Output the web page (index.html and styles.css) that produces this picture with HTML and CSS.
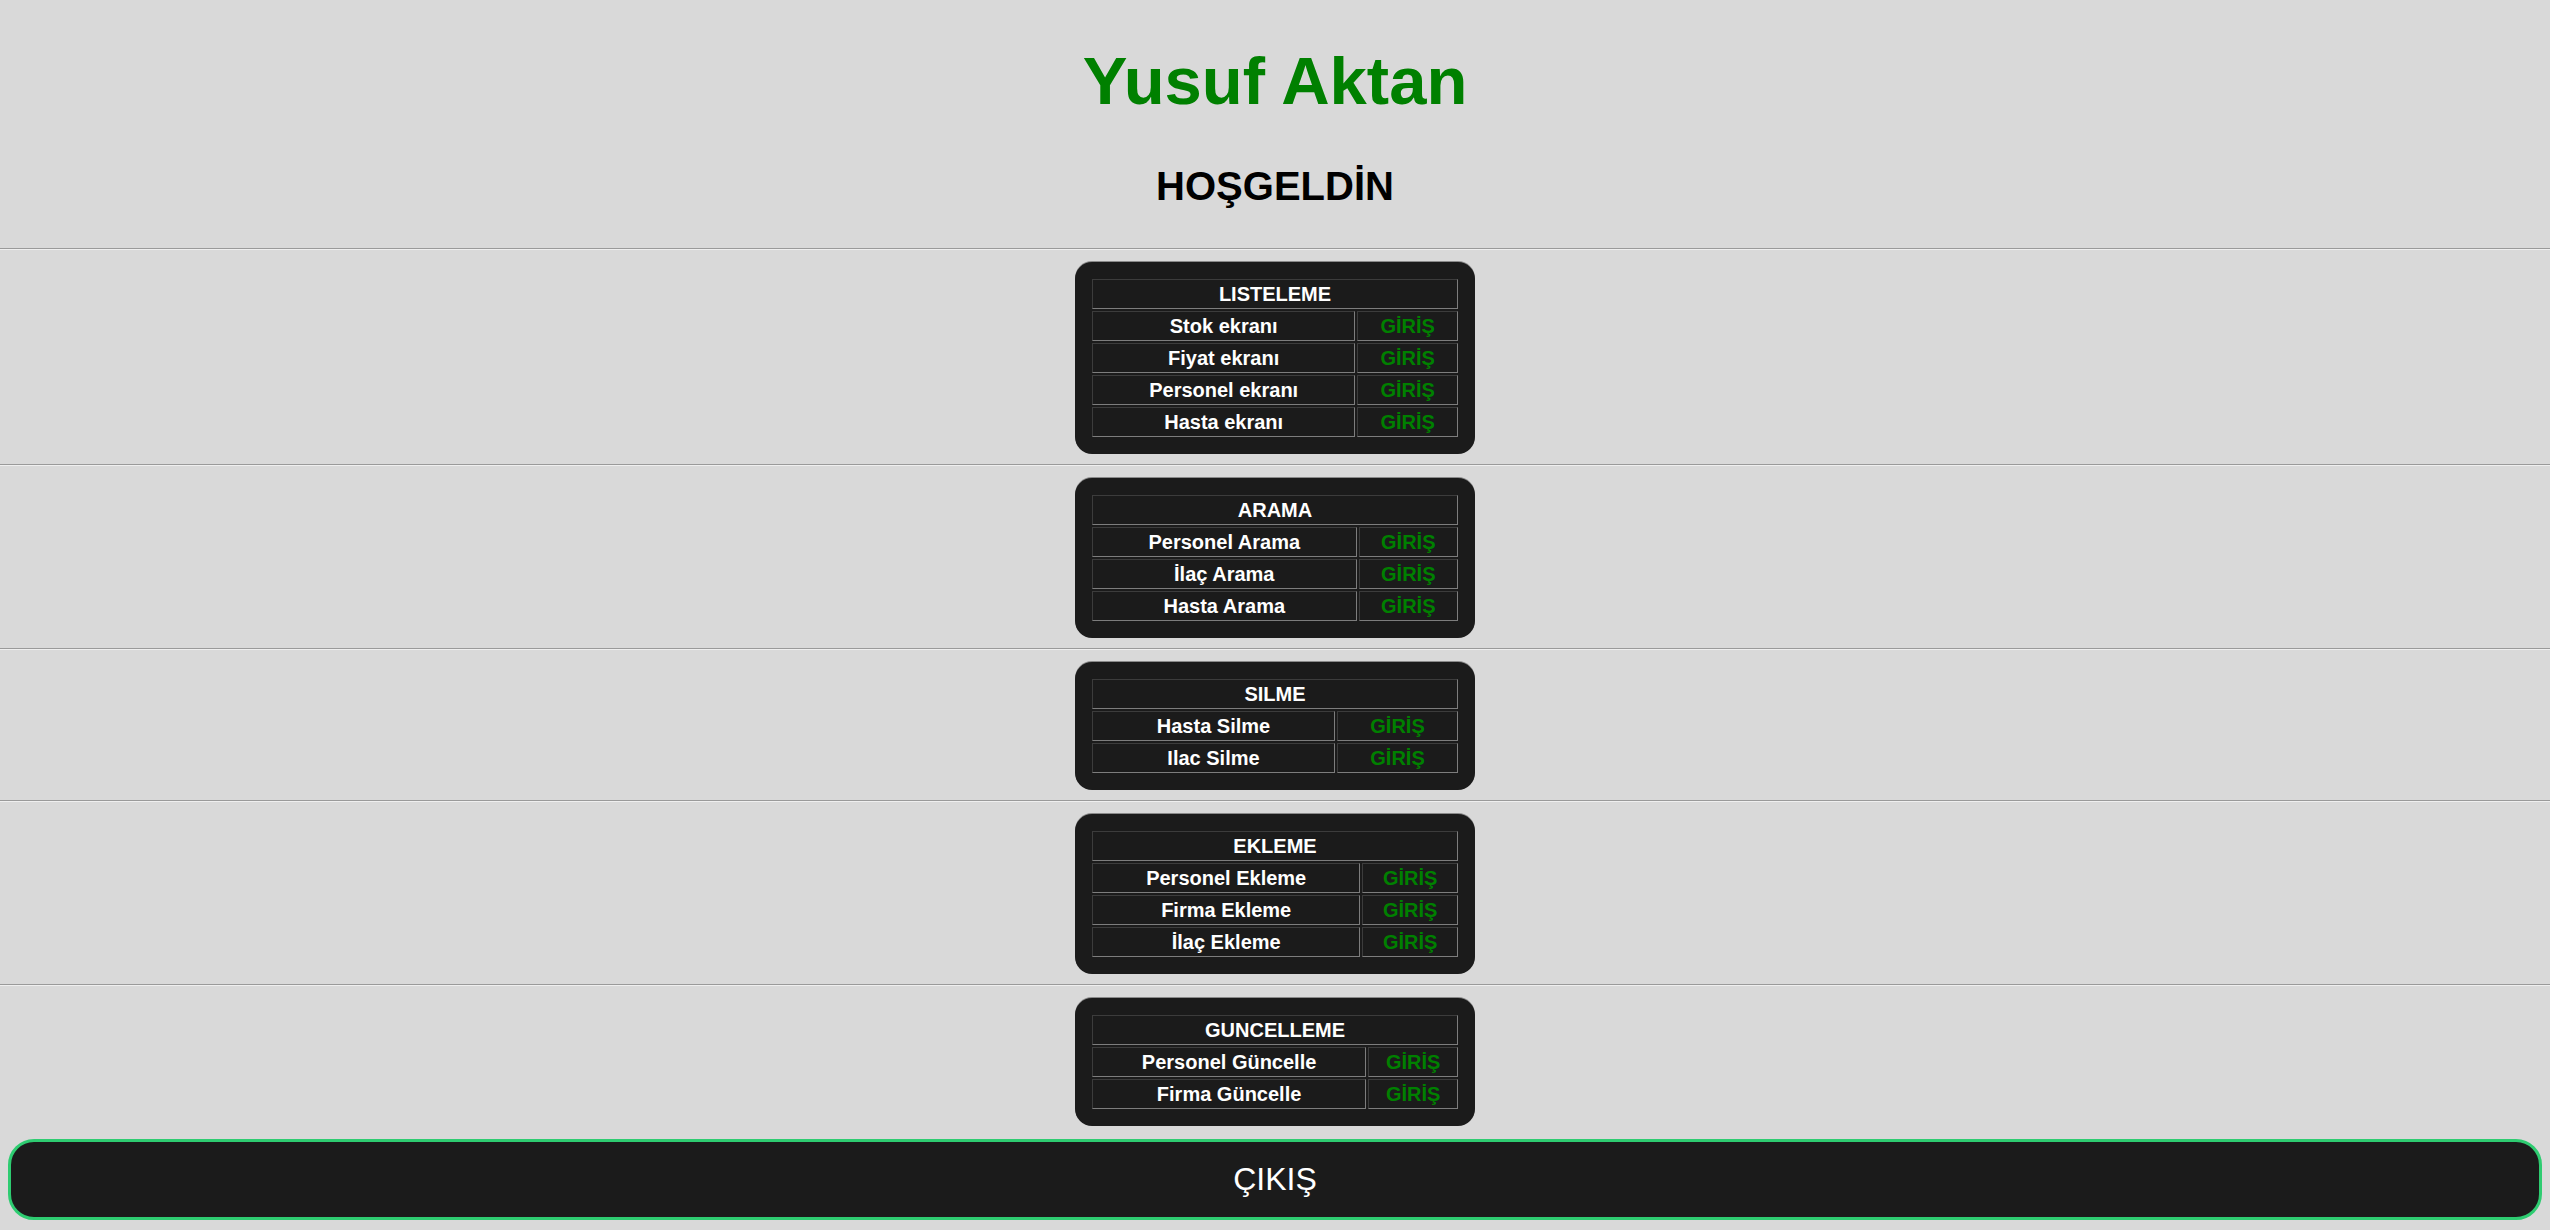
FILE: index.html
```html
<!DOCTYPE html>
<html lang="tr">
<head>
<meta charset="utf-8">
<title>Yusuf Aktan</title>
<link rel="stylesheet" href="styles.css">
</head>
<body>
<header class="top">
  <h1 class="name">Yusuf Aktan</h1>
  <h2 class="welcome">HOŞGELDİN</h2>
</header>
<hr class="rule">
<section class="block">
  <div class="panel">
    <table class="menu">
      <tr><th colspan="2">LISTELEME</th></tr>
      <tr><td>Stok ekranı</td><td class="go">GİRİŞ</td></tr>
      <tr><td>Fiyat ekranı</td><td class="go">GİRİŞ</td></tr>
      <tr><td>Personel ekranı</td><td class="go">GİRİŞ</td></tr>
      <tr><td>Hasta ekranı</td><td class="go">GİRİŞ</td></tr>
    </table>
  </div>
</section>
<hr class="rule">
<section class="block">
  <div class="panel">
    <table class="menu">
      <tr><th colspan="2">ARAMA</th></tr>
      <tr><td>Personel Arama</td><td class="go">GİRİŞ</td></tr>
      <tr><td>İlaç Arama</td><td class="go">GİRİŞ</td></tr>
      <tr><td>Hasta Arama</td><td class="go">GİRİŞ</td></tr>
    </table>
  </div>
</section>
<hr class="rule">
<section class="block">
  <div class="panel">
    <table class="menu">
      <tr><th colspan="2">SILME</th></tr>
      <tr><td>Hasta Silme</td><td class="go">GİRİŞ</td></tr>
      <tr><td>Ilac Silme</td><td class="go">GİRİŞ</td></tr>
    </table>
  </div>
</section>
<hr class="rule">
<section class="block">
  <div class="panel">
    <table class="menu">
      <tr><th colspan="2">EKLEME</th></tr>
      <tr><td>Personel Ekleme</td><td class="go">GİRİŞ</td></tr>
      <tr><td>Firma Ekleme</td><td class="go">GİRİŞ</td></tr>
      <tr><td>İlaç Ekleme</td><td class="go">GİRİŞ</td></tr>
    </table>
  </div>
</section>
<hr class="rule">
<section class="block last">
  <div class="panel">
    <table class="menu">
      <tr><th colspan="2">GUNCELLEME</th></tr>
      <tr><td>Personel Güncelle</td><td class="go">GİRİŞ</td></tr>
      <tr><td>Firma Güncelle</td><td class="go">GİRİŞ</td></tr>
    </table>
  </div>
</section>
<button class="exit" type="button">ÇIKIŞ</button>
</body>
</html>
```

FILE: styles.css
```css
html, body {
  margin: 0;
  padding: 0;
}
body {
  background: #d9d9d9;
  font-family: "Liberation Sans", Arial, sans-serif;
  color: #000;
}
.top {
  text-align: center;
  padding-top: 41px;
  height: 207px;
}
.name {
  margin: 0;
  font-size: 67px;
  line-height: 80px;
  font-weight: bold;
  color: #008000;
}
.welcome {
  margin: 42px 0 0;
  font-size: 40px;
  line-height: 46px;
  font-weight: bold;
}
.rule {
  margin: 0;
  height: 0;
  border: 0;
  border-top: 1px solid #9a9a9a;
  border-bottom: 1px solid #efefef;
}
.block {
  padding: 12px 0 10px;
}
.block.last {
  padding-bottom: 0;
}
.panel {
  width: 400px;
  box-sizing: border-box;
  margin: 0 auto;
  padding: 15px;
  background: #1b1b1b;
  border-radius: 17px;
  box-shadow: 0 -1px 0 #8a8a8a;
}
.menu {
  width: 100%;
  border-collapse: separate;
  border-spacing: 2px;
}
.menu th,
.menu td {
  padding: 0 1px;
  height: 30px;
  box-sizing: border-box;
  line-height: 28px;
  font-size: 20px;
  font-weight: bold;
  color: #fff;
  text-align: center;
  border: 1px solid;
  border-color: #3c3c3c #7d7d7d #7d7d7d #3c3c3c;
  white-space: nowrap;
}
.menu td.go {
  color: #008000;
}
.exit {
  display: block;
  box-sizing: border-box;
  width: calc(100% - 16px);
  height: 81px;
  margin: 13px 8px 0;
  background: #1b1b1b;
  border: 3px solid #2ecc71;
  border-radius: 26px;
  color: #fff;
  font-family: "Liberation Sans", Arial, sans-serif;
  font-size: 32px;
  font-weight: normal;
  cursor: pointer;
}
```
